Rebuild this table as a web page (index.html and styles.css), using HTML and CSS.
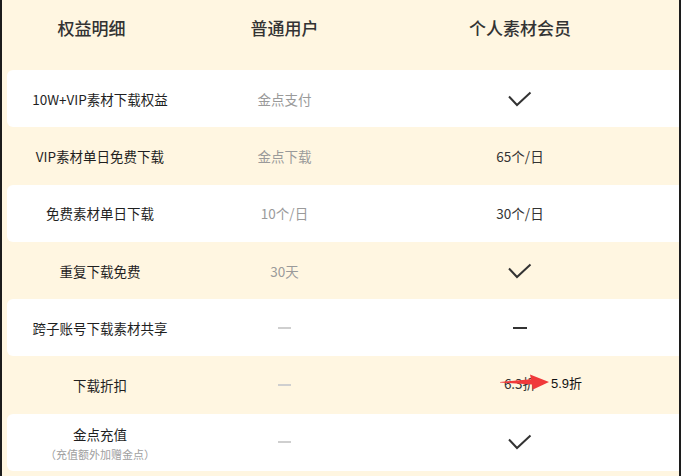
FILE: index.html
```html
<!DOCTYPE html>
<html lang="zh-CN">
<head>
<meta charset="utf-8">
<title>权益明细</title>
<link rel="stylesheet" href="styles.css">
</head>
<body>
<div class="frame">
  <div class="table">
    <div class="row head">
      <div class="cell c1">权益明细</div>
      <div class="cell c2">普通用户</div>
      <div class="cell c3">个人素材会员</div>
    </div>
    <div class="row white">
      <div class="cell c1">10W+VIP素材下载权益</div>
      <div class="cell c2">金点支付</div>
      <div class="cell c3"><svg class="check" width="24" height="16" viewBox="0 0 24 16"><polyline points="1,5.5 9,14 22.5,1.5" fill="none" stroke="#333" stroke-width="2"/></svg></div>
    </div>
    <div class="row">
      <div class="cell c1">VIP素材单日免费下载</div>
      <div class="cell c2">金点下载</div>
      <div class="cell c3">65个/日</div>
    </div>
    <div class="row white">
      <div class="cell c1">免费素材单日下载</div>
      <div class="cell c2">10个/日</div>
      <div class="cell c3">30个/日</div>
    </div>
    <div class="row">
      <div class="cell c1">重复下载免费</div>
      <div class="cell c2">30天</div>
      <div class="cell c3"><svg class="check" width="24" height="16" viewBox="0 0 24 16"><polyline points="1,5.5 9,14 22.5,1.5" fill="none" stroke="#333" stroke-width="2"/></svg></div>
    </div>
    <div class="row white">
      <div class="cell c1">跨子账号下载素材共享</div>
      <div class="cell c2"><span class="dash light"></span></div>
      <div class="cell c3"><span class="dash dark"></span></div>
    </div>
    <div class="row">
      <div class="cell c1">下载折扣</div>
      <div class="cell c2"><span class="dash light"></span></div>
      <div class="cell c3 rel"><span class="oldprice">6.3折</span>
        <svg class="arrow" width="50" height="18" viewBox="0 0 50 18"><polygon points="0,9 31,6.2 30,1.5 49,9 33,16.5 32,11.6 0,9.6" fill="#f0393a"/></svg>
        <span class="newprice">5.9折</span>
      </div>
    </div>
    <div class="row white">
      <div class="cell c1 stack"><span class="main">金点充值</span><span class="sub">（充值额外加赠金点）</span></div>
      <div class="cell c2"><span class="dash light"></span></div>
      <div class="cell c3"><svg class="check" width="24" height="16" viewBox="0 0 24 16"><polyline points="1,5.5 9,14 22.5,1.5" fill="none" stroke="#333" stroke-width="2"/></svg></div>
    </div>
  </div>
</div>
</body>
</html>
```
FILE: styles.css
```css
html, body {
  margin: 0;
  padding: 0;
}
body {
  width: 681px;
  height: 476px;
  overflow: hidden;
  font-family: "Noto Sans CJK SC", "Noto Sans", sans-serif;
}
.frame {
  box-sizing: border-box;
  width: 681px;
  height: 476px;
  border-left: 2px solid #1c1c1c;
  border-right: 2px solid #1c1c1c;
  background: #fff6e1;
  overflow: hidden;
}
.table {
  padding-left: 5px;
  width: 720px;
}
.row {
  display: grid;
  grid-template-columns: 186px 183px 288px 1fr;
  height: 57.3px;
  align-items: center;
  font-size: 13.5px;
  color: #333;
}
.row.head {
  height: 70px;
  align-items: start;
  font-size: 17px;
  font-weight: 500;
  color: #333;
}
.row.head .cell {
  padding-top: 16px;
  line-height: 24px;
}
.row.head .c1 {
  padding-right: 17px;
}
.row.white {
  background: #ffffff;
  border-radius: 6px 0 0 6px;
}
.cell {
  text-align: center;
  display: flex;
  justify-content: center;
  align-items: center;
  white-space: nowrap;
}
.c1 {
  font-weight: 400;
  color: #1f1f1f;
}
.row.head .c1 {
  font-weight: 500;
  color: #333;
}
.c2 {
  color: #9a9a9a;
}
.row.head .c2 {
  color: #333;
}
.c3 {
  color: #333;
}
.check {
  display: block;
}
.dash {
  display: block;
  height: 2px;
}
.dash.light {
  width: 13px;
  background: #cfcfcf;
}
.dash.dark {
  width: 14px;
  background: #333;
}
.rel {
  position: relative;
  height: 100%;
}
.oldprice {
  position: relative;
  top: -2px;
}
.arrow {
  position: absolute;
  left: 124px;
  top: 17px;
}
.newprice {
  position: absolute;
  left: 175px;
  top: 20px;
  font-family: "Liberation Sans", "Noto Sans CJK SC", sans-serif;
  font-size: 13px;
  line-height: 16px;
  color: #111;
}
.stack {
  flex-direction: column;
  padding-top: 3px;
}
.stack .main {
  line-height: 20px;
  font-size: 13.5px;
  font-weight: 400;
}
.stack .sub {
  line-height: 20px;
  font-size: 11px;
  font-weight: 400;
  color: #a0a0a0;
}
```
